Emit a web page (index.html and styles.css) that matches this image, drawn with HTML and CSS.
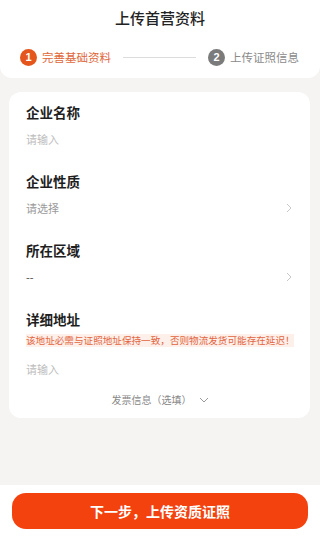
FILE: index.html
```html
<!DOCTYPE html>
<html lang="zh-CN">
<head>
<meta charset="utf-8">
<meta name="viewport" content="width=device-width, initial-scale=1">
<title>上传首营资料</title>
<link rel="stylesheet" href="styles.css">
</head>
<body>
<div class="page">
  <header class="header">
    <h1 class="title">上传首营资料</h1>
    <div class="steps">
      <div class="step step-active">
        <span class="step-num">1</span>
        <span class="step-text">完善基础资料</span>
      </div>
      <div class="step-line"></div>
      <div class="step step-todo">
        <span class="step-num">2</span>
        <span class="step-text">上传证照信息</span>
      </div>
    </div>
  </header>

  <main class="main">
    <section class="card">
      <div class="field">
        <div class="label">企业名称</div>
        <div class="value placeholder">请输入</div>
      </div>
      <div class="field">
        <div class="label">企业性质</div>
        <div class="value select">
          <span>请选择</span>
          <svg class="chev" width="6" height="10" viewBox="0 0 6 10"><path d="M1 1 L5 5 L1 9" fill="none" stroke="#c8c8c8" stroke-width="1"/></svg>
        </div>
      </div>
      <div class="field">
        <div class="label">所在区域</div>
        <div class="value select dark">
          <span>--</span>
          <svg class="chev" width="6" height="10" viewBox="0 0 6 10"><path d="M1 1 L5 5 L1 9" fill="none" stroke="#c8c8c8" stroke-width="1"/></svg>
        </div>
      </div>
      <div class="field field-last">
        <div class="label">详细地址</div>
        <div class="warn">该地址必需与证照地址保持一致，否则物流发货可能存在延迟！</div>
        <div class="value placeholder addr">请输入</div>
      </div>
      <div class="invoice">
        <span>发票信息（选填）</span>
        <svg width="10" height="6" viewBox="0 0 10 6"><path d="M1 1 L5 5 L9 1" fill="none" stroke="#9a9a9a" stroke-width="1"/></svg>
      </div>
    </section>
  </main>

  <footer class="footer">
    <button class="next-btn" type="button">下一步，上传资质证照</button>
  </footer>
</div>
</body>
</html>
```

FILE: styles.css
```css
* { box-sizing: border-box; }
html, body { margin: 0; padding: 0; }
body {
  font-family: "Noto Sans CJK SC", "Noto Sans", sans-serif;
  background: #f5f4f2;
  color: #222;
}
.page {
  height: 546px;
  display: flex;
  flex-direction: column;
}
.header {
  background: #fff;
  height: 78px;
  border-radius: 0 0 12px 12px;
  padding-top: 8px;
}
.title {
  margin: 0;
  font-size: 15px;
  line-height: 20px;
  font-weight: 500;
  text-align: center;
  color: #222;
}
.steps {
  display: flex;
  align-items: center;
  margin-top: 20px;
  padding-left: 20px;
  height: 18px;
}
.step {
  display: flex;
  align-items: center;
}
.step-num {
  width: 17px;
  height: 17px;
  border-radius: 50%;
  color: #fff;
  font-size: 11px;
  font-weight: 700;
  line-height: 17px;
  text-align: center;
  font-family: "Liberation Sans", sans-serif;
}
.step-text {
  margin-left: 5px;
  font-size: 11.5px;
  line-height: 16px;
}
.step-active .step-num { background: #e4561b; }
.step-active .step-text { color: #e0683a; }
.step-todo .step-num { background: #7b7b7b; }
.step-todo .step-text { color: #8a8a8a; }
.step-line {
  width: 73px;
  height: 1px;
  background: #dcdcdc;
  margin: 0 12px 0 12px;
}
.main {
  flex: 1;
  padding-top: 14px;
}
.card {
  background: #fff;
  margin: 0 10px 0 9px;
  border-radius: 12px;
  padding: 11px 16px 10px 17px;
}
.field { margin-bottom: 15px; }
.field-last { margin-bottom: 5px; }
.label {
  font-size: 13.5px;
  line-height: 18px;
  font-weight: 700;
  color: #1e1e1e;
}
.value {
  height: 36px;
  display: flex;
  align-items: center;
  justify-content: space-between;
  font-size: 11px;
  color: #9a9a9a;
}
.value.placeholder { color: #bdbdbd; }
.value.dark { color: #444; }
.chev { margin-right: 2px; }
.warn {
  margin-top: 6px;
  background: #fdefe9;
  color: #e2653f;
  font-size: 9.6px;
  line-height: 13px;
  white-space: nowrap;
  letter-spacing: 0;
}
.addr { margin-top: 4px; }
.invoice {
  display: flex;
  justify-content: center;
  align-items: center;
  gap: 7px;
  font-size: 10px;
  line-height: 16px;
  color: #888;
}
.footer {
  background: #fff;
  height: 61px;
  padding: 8px 12px 0 12px;
}
.next-btn {
  width: 100%;
  height: 36px;
  border: none;
  border-radius: 14px;
  background: #f4420f;
  color: #fff;
  font-family: "Noto Sans CJK SC", "Noto Sans", sans-serif;
  font-size: 14px;
  font-weight: 700;
  padding: 0;
}
```
